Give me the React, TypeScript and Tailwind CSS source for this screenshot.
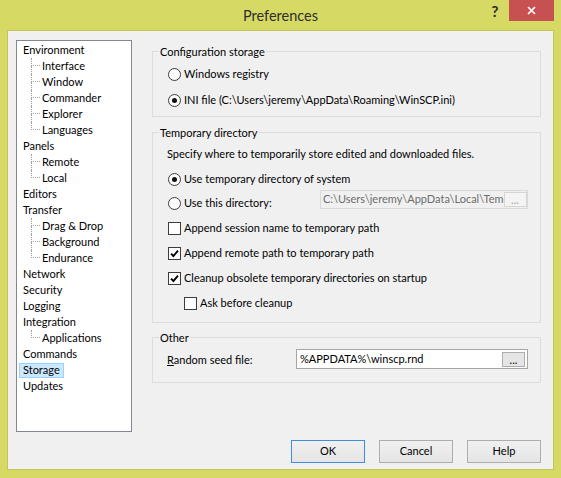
import React from "react";

type Node = { label: string; children?: string[]; selected?: boolean };

const tree: Node[] = [
  { label: "Environment", children: ["Interface", "Window", "Commander", "Explorer", "Languages"] },
  { label: "Panels", children: ["Remote", "Local"] },
  { label: "Editors" },
  { label: "Transfer", children: ["Drag & Drop", "Background", "Endurance"] },
  { label: "Network" },
  { label: "Security" },
  { label: "Logging" },
  { label: "Integration", children: ["Applications"] },
  { label: "Commands" },
  { label: "Storage", selected: true },
  { label: "Updates" },
];

function Radio({ checked, label }: { checked?: boolean; label: string }) {
  return (
    <div className="flex h-[16px] items-center">
      <span className="flex h-[13px] w-[13px] items-center justify-center rounded-full border border-[#3c3c3c] bg-white">
        {checked && <span className="h-[5px] w-[5px] rounded-full bg-[#111]" />}
      </span>
      <span className="ml-[3px] whitespace-nowrap">{label}</span>
    </div>
  );
}

function Check({ checked, label }: { checked?: boolean; label: string }) {
  return (
    <div className="flex h-[16px] items-center">
      <span className="flex h-[13px] w-[13px] items-center justify-center border border-[#3c3c3c] bg-white">
        {checked && (
          <svg width="9" height="9" viewBox="0 0 9 9">
            <path d="M1 4.6 L3.4 7 L8 1.6" stroke="#000" strokeWidth="1.9" fill="none" />
          </svg>
        )}
      </span>
      <span className="ml-[3px] whitespace-nowrap">{label}</span>
    </div>
  );
}

function Group({ title, children, className }: { title: string; children: React.ReactNode; className?: string }) {
  return (
    <div className={"border border-[#dcdcdc] " + (className ?? "")}>
      <div className="-mt-[8px] ml-[6px] h-[15px] w-fit bg-[#f0f0f0] px-[1px] leading-[15px]">{title}</div>
      {children}
    </div>
  );
}

function Dots({ disabled }: { disabled?: boolean }) {
  return (
    <span
      className={
        "mr-[2px] flex h-[15px] w-[23px] shrink-0 items-end justify-center border leading-[13px] " +
        (disabled ? "border-[#d5d5d5] bg-[#f4f4f4] text-[#a0a0a0]" : "border-[#adadad] bg-[#e5e5e5] text-[#000]")
      }
    >
      ...
    </span>
  );
}

function Button({ label, def }: { label: string; def?: boolean }) {
  return (
    <div
      className={
        "flex h-[23px] w-[74px] items-center justify-center border bg-gradient-to-b from-[#f0f0f0] to-[#e5e5e5] " +
        (def ? "border-[#3c8fdf]" : "border-[#adadad]")
      }
    >
      {label}
    </div>
  );
}

export default function App() {
  return (
    <div className="flex h-[478px] w-[561px] flex-col bg-[#d6da64] font-['Lato',sans-serif] text-[11px] text-black">
      {/* title bar */}
      <div className="flex h-[30px] shrink-0">
        <div className="flex-1 pl-[73px] text-center text-[14.5px] leading-[32px] text-[#2e2e2e]">Preferences</div>
        <div className="flex items-start pr-[7px]">
          <span className="mt-[3px] w-[14px] text-center text-[15px] font-bold leading-[17px] text-[#2a2a2a]">?</span>
          <div className="ml-[7px] flex h-[21px] w-[45px] items-center justify-center bg-[#c75050]">
            <svg width="9" height="9" viewBox="0 0 9 9">
              <path d="M1 1 L8 8 M8 1 L1 8" stroke="#fff" strokeWidth="1.7" fill="none" />
            </svg>
          </div>
        </div>
      </div>

      {/* client area */}
      <div className="mx-[7px] flex h-[440px] shrink-0 flex-col border border-[#c3c75a] bg-[#f0f0f0]">
        <div className="flex pl-[8px] pt-[9px]">
          {/* tree */}
          <div className="h-[392px] w-[116px] shrink-0 border border-[#828790] bg-white pl-[2px] pt-[1px]">
            {tree.map((n) => (
              <div key={n.label}>
                <div className="flex h-[16px] items-center">
                  <span
                    className={
                      "flex h-[15px] items-center border px-[3px] " +
                      (n.selected ? "border-[#99d1ff] bg-[#cce8ff]" : "border-transparent")
                    }
                  >
                    {n.label}
                  </span>
                </div>
                {n.children?.map((c, i) => {
                  const last = i === n.children!.length - 1;
                  return (
                    <div key={c} className="flex h-[16px]">
                      <div className="w-[12px] shrink-0" />
                      <div className="flex w-[9px] shrink-0 flex-col">
                        <div className="h-[8px] border-b border-l border-dotted border-[#a0a0a0]" />
                        <div className={"h-[8px] " + (last ? "" : "border-l border-dotted border-[#a0a0a0]")} />
                      </div>
                      <span className="ml-[2px] flex items-center">{c}</span>
                    </div>
                  );
                })}
              </div>
            ))}
          </div>

          {/* right panel */}
          <div className="ml-[20px] w-[389px] shrink-0 pt-[11px]">
            <Group title="Configuration storage">
              <div className="pb-[8px] pl-[15px]">
                <div className="mt-[7px]">
                  <Radio label="Windows registry" />
                </div>
                <div className="mt-[10px]">
                  <Radio checked label="INI file (C:\Users\jeremy\AppData\Roaming\WinSCP.ini)" />
                </div>
              </div>
            </Group>

            <Group title="Temporary directory" className="mt-[15px]">
              <div className="pb-[11px] pl-[14px] pr-[12px]">
                <div className="mt-[6px] flex h-[16px] items-center">
                  Specify where to temporarily store edited and downloaded files.
                </div>
                <div className="mt-[9px] pl-[1px]">
                  <Radio checked label="Use temporary directory of system" />
                </div>
                <div className="mt-[3px] flex items-start pl-[1px]">
                  <div className="mt-[5px]">
                    <Radio label="Use this directory:" />
                  </div>
                  <div className="ml-auto flex h-[19px] w-[208px] items-center border border-[#d9d9d9] bg-[#f0f0f0]">
                    <span className="flex-1 whitespace-nowrap pl-[2px] text-[#6d6d6d]">
                      C:\Users\jeremy\AppData\Local\Tem
                    </span>
                    <Dots disabled />
                  </div>
                </div>
                <div className="mt-[9px] pl-[1px]">
                  <Check label="Append session name to temporary path" />
                </div>
                <div className="mt-[9px] pl-[1px]">
                  <Check checked label="Append remote path to temporary path" />
                </div>
                <div className="mt-[9px] pl-[1px]">
                  <Check checked label="Cleanup obsolete temporary directories on startup" />
                </div>
                <div className="mt-[9px] pl-[17px]">
                  <Check label="Ask before cleanup" />
                </div>
              </div>
            </Group>

            <Group title="Other" className="mt-[14px]">
              <div className="flex items-center pb-[13px] pl-[14px] pr-[12px] pt-[4px]">
                <span className="mt-[2px] whitespace-nowrap">
                  <span className="underline">R</span>andom seed file:
                </span>
                <div className="ml-auto flex h-[20px] w-[232px] items-center border border-[#a5a5a5] bg-white">
                  <span className="flex-1 whitespace-nowrap pl-[3px]">%APPDATA%\winscp.rnd</span>
                  <Dots />
                </div>
              </div>
            </Group>
          </div>
        </div>

        {/* buttons */}
        <div className="mt-[8px] flex justify-end gap-[14px] pr-[12px]">
          <Button label="OK" def />
          <Button label="Cancel" />
          <Button label="Help" />
        </div>
      </div>
    </div>
  );
}
